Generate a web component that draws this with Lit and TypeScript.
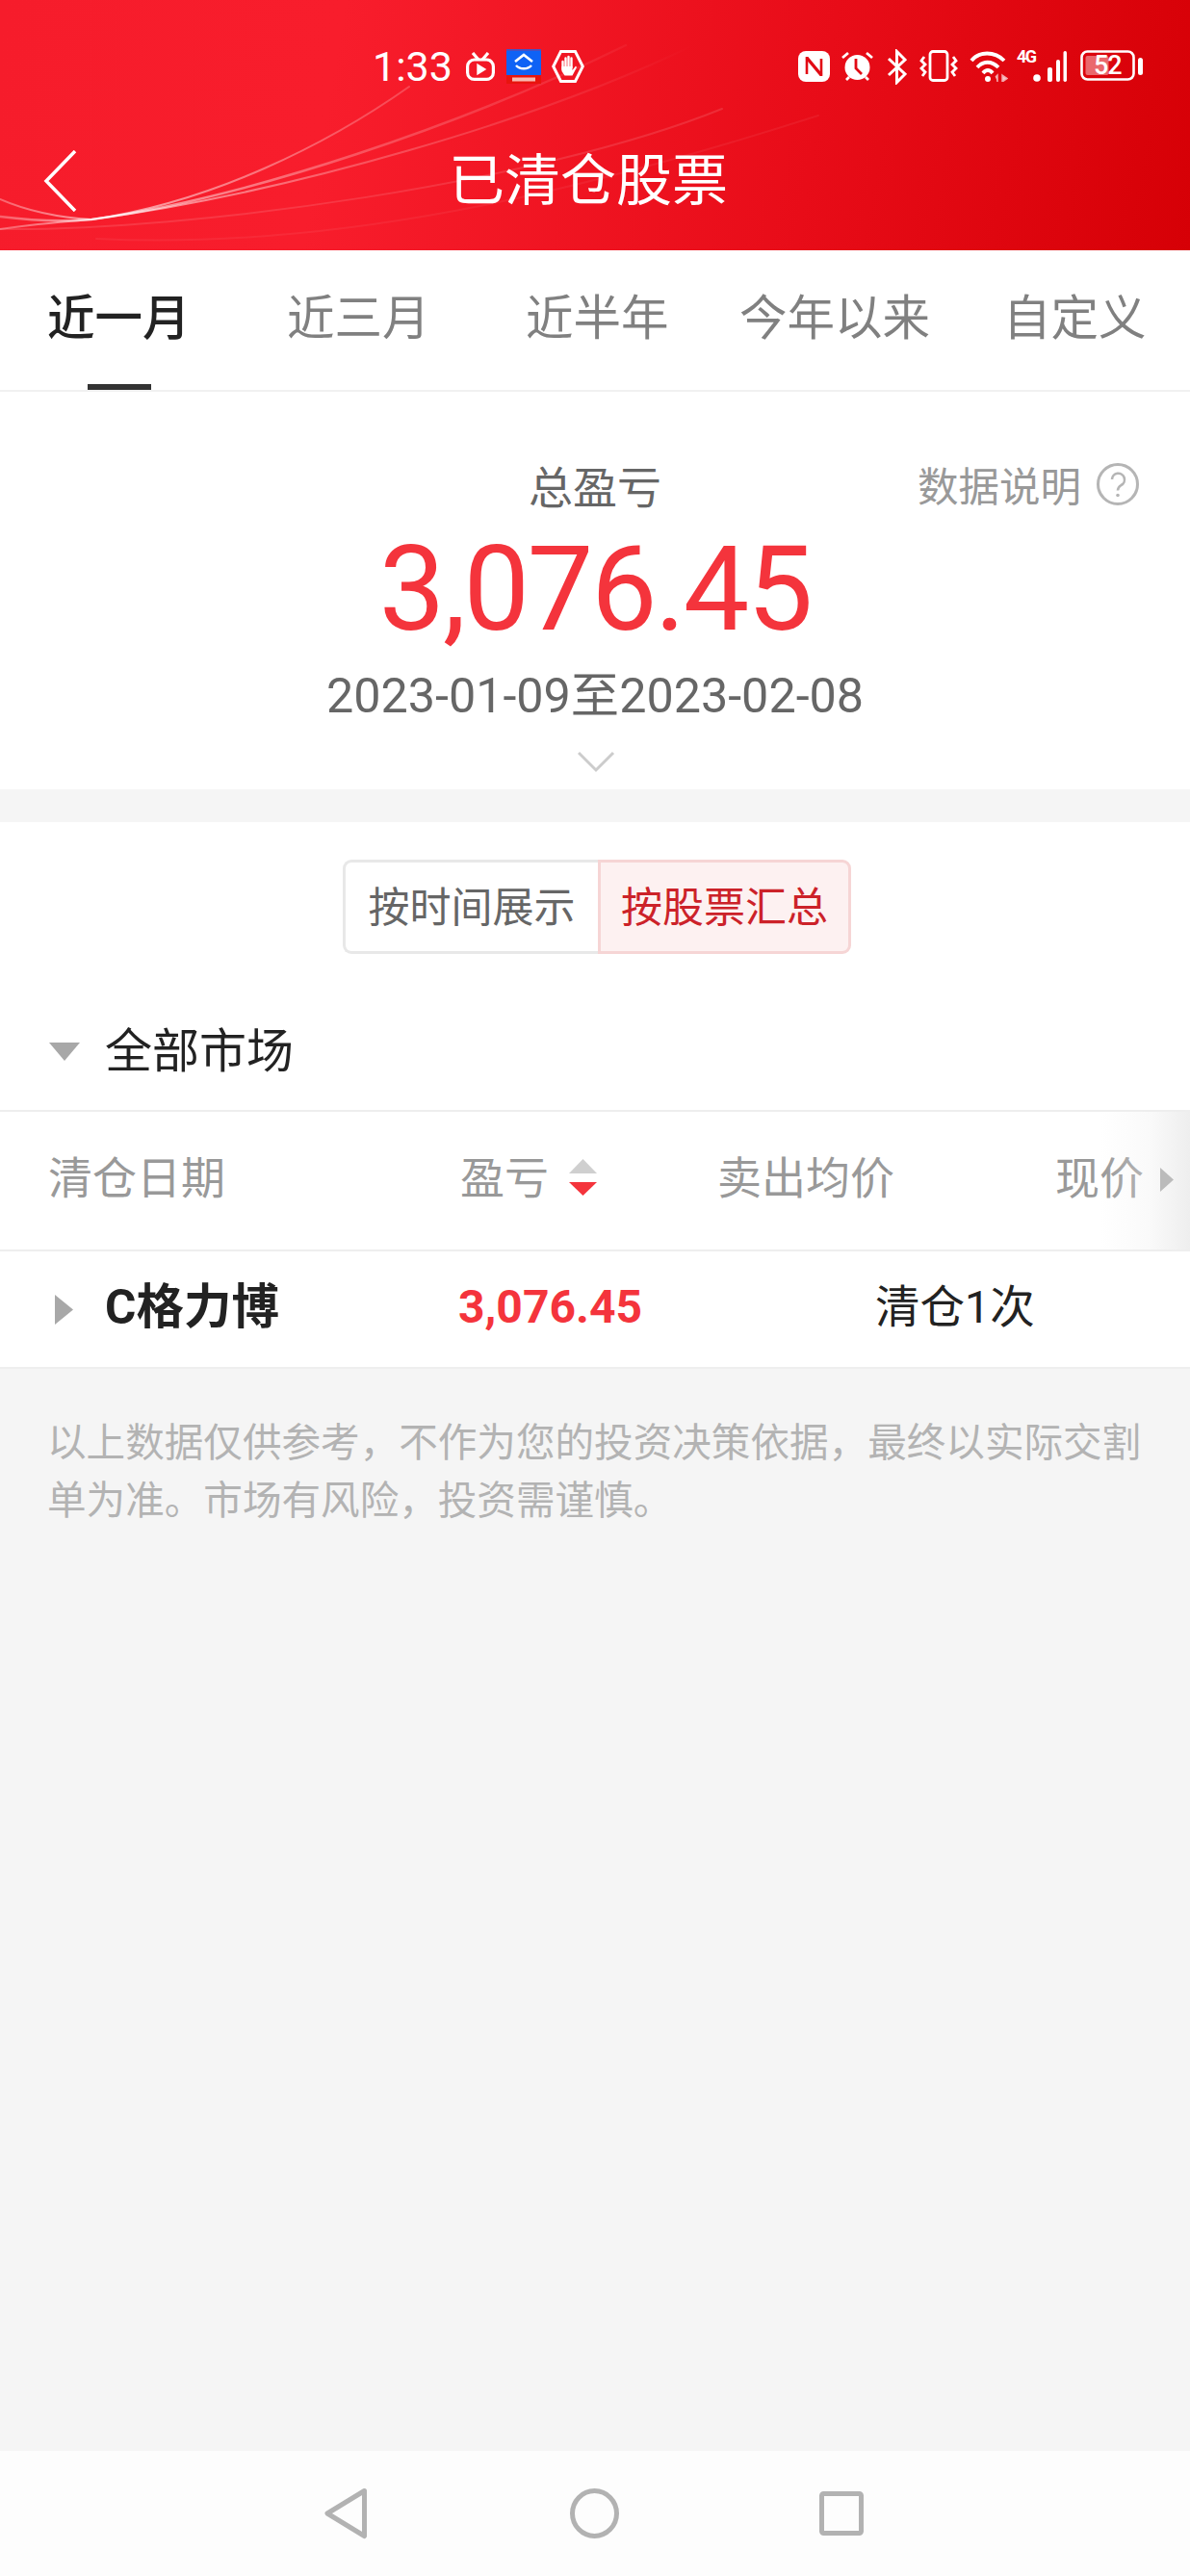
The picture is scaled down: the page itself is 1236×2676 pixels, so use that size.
import { LitElement, html, css } from "lit";
import { customElement } from "lit/decorators.js";

@customElement("app-root")
export class AppRoot extends LitElement {
  static styles = css`
    :host { display: block; width: 1236px; height: 2676px; background: #f5f5f5; font-family: "Roboto", "Noto Sans CJK SC", sans-serif; overflow: hidden; }
    .page { display: flex; flex-direction: column; height: 2676px; }
    .header { position: relative; height: 260px; flex: none; background: linear-gradient(100deg, #f61c2b 0%, #f81d2c 28%, #e80c18 68%, #d60006 100%); color: #fff; overflow: hidden; }
    .lines { position: absolute; inset: 0; }
    .status { position: relative; height: 70px; }
    .time { position: absolute; left: 387px; top: 46px; font-size: 43px; line-height: 46px; font-family: "Roboto", sans-serif; }
    .sicon { position: absolute; }
    .bar { position: relative; height: 190px; display: flex; align-items: center; justify-content: center; }
    .title { font-size: 58px; line-height: 70px; margin: 0 12px 0 0; position: relative; top: 18px; left: -1px; font-family: "Noto Sans CJK SC", sans-serif; }
    .back { position: absolute; left: 44px; top: 86px; }
    .tabs { height: 147px; flex: none; box-sizing: border-box; background: #fff; border-bottom: 2px solid #f1f1f1; position: relative; font-family: "Noto Sans CJK SC", sans-serif; font-size: 49.5px; color: #808080; }
    .tab { position: absolute; top: 35px; line-height: 64px; white-space: nowrap; }
    .tab.on { color: #222; font-weight: 500; }
    .tab.on::after { content: ""; position: absolute; left: 42px; width: 66px; height: 6px; top: 104px; background: #333; }
    .summary { position: relative; height: 413px; flex: none; background: #fff; display: flex; flex-direction: column; align-items: center; }
    .sum-label { margin-top: 68px; font-size: 46px; line-height: 56px; color: #666; font-family: "Noto Sans CJK SC", sans-serif; }
    .sum-value { margin-top: 17px; font-size: 122px; line-height: 130px; color: #f4343c; font-family: "Roboto", sans-serif; letter-spacing: -2.4px; }
    .sum-date { margin-top: 17px; font-size: 50.3px; line-height: 56px; color: #666; font-family: "Roboto", "Noto Sans CJK SC", sans-serif; }
    .note { position: absolute; right: 52px; top: 68px; display: flex; align-items: center; gap: 15px; font-size: 42.5px; line-height: 56px; color: #999; font-family: "Noto Sans CJK SC", sans-serif; }
    .chev { position: absolute; left: 600px; top: 372px; }
    .card { margin-top: 34px; background: #fff; flex: none; }
    .toggle-wrap { padding-top: 39px; display: flex; padding-left: 356px; }
    .toggle { display: flex; height: 98px; font-size: 43px; font-family: "Noto Sans CJK SC", sans-serif; }
    .tg { box-sizing: border-box; display: flex; align-items: center; justify-content: center; padding-bottom: 6px; }
    .tg.off { width: 265px; color: #666; border: 3px solid #e8e8e8; border-right: none; border-radius: 9px 0 0 9px; }
    .tg.on { width: 263px; color: #cc2229; background: #fdf1f1; border: 3px solid #f6d5d5; border-radius: 0 9px 9px 0; }
    .market { height: 164px; box-sizing: border-box; padding-top: 30px; border-bottom: 2px solid #eeeeee; display: flex; align-items: center; font-size: 49px; color: #222; font-family: "Noto Sans CJK SC", sans-serif; }
    .tri-d { margin: 10px 26px 0 51px; }
    .thead { position: relative; height: 145px; box-sizing: border-box; border-bottom: 2px solid #eeeeee; font-size: 46px; color: #999; font-family: "Noto Sans CJK SC", sans-serif; }
    .th { position: absolute; top: 35px; line-height: 60px; white-space: nowrap; display: flex; align-items: center; }
    .sort { margin-left: 21px; margin-top: 6px; }
    .fade { position: absolute; right: 0; top: 0; bottom: 0; width: 93px; background: linear-gradient(90deg, rgba(238,238,238,0) 0%, rgba(240,240,240,.35) 55%, #eeeeee 100%); }
    .th-arrow { position: absolute; left: 1205px; top: 58px; }
    .row { position: relative; height: 122px; box-sizing: border-box; border-bottom: 2px solid #eeeeee; }
    .cell { position: absolute; top: 28px; line-height: 60px; white-space: nowrap; }
    .name { left: 109px; font-size: 49.5px; font-weight: 700; color: #222; font-family: "Roboto", "Noto Sans CJK SC", sans-serif; }
    .pl { left: 476px; font-size: 48px; font-weight: 700; color: #f4343c; font-family: "Roboto", sans-serif; }
    .cnt { left: 909px; font-size: 46.5px; color: #222; font-family: "Roboto", "Noto Sans CJK SC", sans-serif; }
    .tri-r { position: absolute; left: 57px; top: 45px; }
    .disc { padding: 44px 49px 0; font-size: 40.6px; line-height: 60px; color: #b3b3b3; font-family: "Noto Sans CJK SC", sans-serif; }
    .spacer { flex: 1; }
    .nav { height: 130px; flex: none; background: #fdfdfd; position: relative; }
    .nav-icons { position: absolute; left: 0; top: 0; }
    .s4g { left: 1056px; top: 50px; font: 700 18px/18px "Roboto", sans-serif; letter-spacing: -1.5px; color: #fff; }
    .s52 { left: 1136px; top: 50px; font: 500 27px/36px "Roboto", sans-serif; letter-spacing: -1.2px; color: #fff; }
  `;

  render() {
    return html`<div class="page">
      <div class="header">
        <svg class="lines" width="1236" height="260" viewBox="0 0 1236 260" fill="none" stroke="url(#sweep)" stroke-linecap="round">
          <defs>
            <linearGradient id="sweep" gradientUnits="userSpaceOnUse" x1="0" y1="230" x2="720" y2="50">
              <stop offset="0" stop-color="#fff" stop-opacity=".3"/>
              <stop offset=".15" stop-color="#fff" stop-opacity=".6"/>
              <stop offset=".5" stop-color="#fff" stop-opacity=".25"/>
              <stop offset="1" stop-color="#fff" stop-opacity="0"/>
            </linearGradient>
          </defs>
          <path d="M0 207 C30 220 60 226 95 228 C220 210 340 150 425 90" stroke-width="2"/>
          <path d="M0 225 C40 230 70 230 95 228 C260 205 480 130 650 47" stroke-width="2.5"/>
          <path d="M0 238 C40 232 70 230 95 228 C300 200 560 125 720 47" stroke-width="2"/>
          <path d="M0 238 C200 240 560 190 750 113" stroke="#fff" stroke-opacity=".12" stroke-width="2"/>
          <path d="M100 248 C350 260 600 200 850 120" stroke="#fff" stroke-opacity=".06" stroke-width="2"/>
        </svg>
        <div class="status">
          <span class="time">1:33</span>
          ${this.statusIcons()}
        </div>
        <div class="bar">
          <svg class="back" width="38" height="64" viewBox="0 0 38 64" fill="none" stroke="#fff" stroke-width="3.5"><path d="M34 1 L4 32 L34 63"/></svg>
          <span class="title">已清仓股票</span>
        </div>
      </div>
      <div class="tabs">
        <span class="tab on" style="left:49px">近一月</span>
        <span class="tab" style="left:298px">近三月</span>
        <span class="tab" style="left:546px">近半年</span>
        <span class="tab" style="left:768px">今年以来</span>
        <span class="tab" style="left:1042px">自定义</span>
      </div>
      <div class="summary">
        <div class="sum-label">总盈亏</div>
        <div class="sum-value">3,076.45</div>
        <div class="sum-date">2023-01-09至2023-02-08</div>
        <div class="note">数据说明
          <svg width="46" height="46" viewBox="0 0 46 46" fill="none"><circle cx="23" cy="23" r="20.5" stroke="#b5b5b5" stroke-width="3"/><path d="M17 18 a6.5 6.5 0 1 1 9.5 6 c-2.5 1.5 -3.5 2.6 -3.5 5.5" stroke="#b5b5b5" stroke-width="2.6"/><circle cx="23" cy="34.5" r="1.8" fill="#b5b5b5"/></svg>
        </div>
        <svg class="chev" width="40" height="24" viewBox="0 0 40 24" fill="none"><path d="M1 3 L19 21 L37 3" stroke="#cccccc" stroke-width="3"/></svg>
      </div>
      <div class="card">
        <div class="toggle-wrap">
          <div class="toggle"><div class="tg off">按时间展示</div><div class="tg on">按股票汇总</div></div>
        </div>
        <div class="market">
          <svg class="tri-d" width="32" height="19" viewBox="0 0 32 19"><path d="M0 0 H32 L16 19 Z" fill="#a8a8a8"/></svg>
          全部市场
        </div>
        <div class="thead">
          <span class="th" style="left:50px">清仓日期</span>
          <span class="th" style="left:478px">盈亏
            <svg class="sort" width="29" height="38" viewBox="0 0 29 38"><path d="M14.5 0 L29 15 H0 Z" fill="#cfcfcf"/><path d="M0 24 H29 L14.5 38 Z" fill="#f4343c"/></svg>
          </span>
          <span class="th" style="left:745px">卖出均价</span>
          <span class="th" style="left:1096px">现价</span>
          <div class="fade"></div>
          <svg class="th-arrow" width="14" height="25" viewBox="0 0 14 25"><path d="M0 0 L14 12.5 L0 25 Z" fill="#bbbbbb"/></svg>
        </div>
        <div class="row">
          <svg class="tri-r" width="19" height="31" viewBox="0 0 19 31"><path d="M0 0 L19 15.5 L0 31 Z" fill="#a8a8a8"/></svg>
          <span class="cell name">C格力博</span>
          <span class="cell pl">3,076.45</span>
          <span class="cell cnt">清仓1次</span>
        </div>
      </div>
      <div class="disc">以上数据仅供参考，不作为您的投资决策依据，最终以实际交割单为准。市场有风险，投资需谨慎。</div>
      <div class="spacer"></div>
      <div class="nav">
        <svg class="nav-icons" width="1236" height="130" viewBox="0 0 1236 130" fill="none" stroke="#b2b2b2" stroke-width="5" stroke-linejoin="round">
          <path d="M378.5 41.5 L340 65 L378.5 88.5 Z"/>
          <ellipse cx="617.5" cy="65" rx="23" ry="23.5"/>
          <rect x="853.5" y="44.5" width="41" height="41" rx="2"/>
        </svg>
      </div>
    </div>`;
  }

  statusIcons() {
    return html`
      <svg class="sicon" style="left:483px;top:54px" width="32" height="30" viewBox="0 0 32 30" fill="none" stroke="#fff" stroke-width="3.2"><path d="M8 1 L14 8 M24 1 L18 8"/><rect x="2.6" y="8" width="26.8" height="20.4" rx="7"/><path d="M13 13 L21 18 L13 23 Z" fill="#fff" stroke-width="1.4"/></svg>
      <svg class="sicon" style="left:526px;top:51px" width="36" height="36" viewBox="0 0 36 36"><rect width="36" height="2" fill="#4a4fc0"/><rect y="2" width="36" height="25" fill="#0f62f5"/><rect y="27" width="36" height="9" fill="#e8140e"/><path d="M9 13 L18 6 L27 13" fill="none" stroke="#fff" stroke-width="2.6"/><path d="M10 17 a9.5 7 0 0 0 16 0" fill="none" stroke="#fff" stroke-width="2.4"/><rect x="6" y="29.5" width="24" height="4" fill="#f7b9b0"/></svg>
      <svg class="sicon" style="left:573px;top:52px" width="34" height="34" viewBox="0 0 34 34" fill="none" stroke="#fff"><path d="M9.5 1.5 H24.5 L32.3 17 L24.5 32.5 H9.5 L1.7 17 Z" stroke-width="3"/><path d="M11.5 12 V20 M14.5 8.5 V17 M17.5 7 V17 M20.5 8.5 V18" stroke-width="2.4" stroke-linecap="round"/><path d="M10.5 17 H21.5 V21 L25 16.5 L26 18 L21.5 26.5 H13.5 L10.5 22 Z" fill="#fff" stroke="none"/></svg>
      <svg class="sicon" style="left:829px;top:53px" width="33" height="32" viewBox="0 0 33 32"><rect width="33" height="32" rx="8" fill="#fff"/><path d="M9 6 V24 M24 8 V26" fill="none" stroke="#e20a14" stroke-width="2.6"/><path d="M9 7 L24 25" fill="none" stroke="#e20a14" stroke-width="3.4"/></svg>
      <svg class="sicon" style="left:873px;top:53px" width="35" height="32" viewBox="0 0 35 32"><circle cx="17.5" cy="17" r="13" fill="#fff"/><path d="M16 8 V18 L22 24" fill="none" stroke="#e20a14" stroke-width="2.8"/><path d="M2 7 L8 2 M33 7 L27 2 M6 30 L9 27 M29 30 L26 27" stroke="#fff" stroke-width="2.8"/></svg>
      <svg class="sicon" style="left:921px;top:51px" width="21" height="37" viewBox="0 0 21 37" fill="none" stroke="#fff" stroke-width="3"><path d="M2 10 L19 26 L10.5 34.5 V2.5 L19 11 L2 27"/></svg>
      <svg class="sicon" style="left:955px;top:52px" width="40" height="33" viewBox="0 0 40 33" fill="none" stroke="#fff" stroke-width="2.8"><rect x="11" y="1.5" width="18" height="30" rx="3"/><path d="M5 7 L2 11 L6 15 L2 19 L6 23 L3 27 M35 7 L38 11 L34 15 L38 19 L34 23 L37 27"/></svg>
      <svg class="sicon" style="left:1007px;top:53px" width="40" height="32" viewBox="0 0 40 32" fill="none" stroke="#fff" stroke-width="3.8"><path d="M2 10 C10 0 26 0 36 10"/><path d="M8 17 C14 10 23 10 30 17"/><path d="M14 23 C17 19 21 19 24 23"/><circle cx="19" cy="29" r="3" fill="#fff" stroke="none"/><path d="M27 27 L29 25 V32 M34 25 L39 28.5 L34 32 Z" stroke="#f4a9ad" stroke-width="1.5" fill="#f8c7c9"/></svg>
      <span class="sicon s4g">4G</span>
      <svg class="sicon" style="left:1073px;top:53px" width="35" height="32" viewBox="0 0 35 32" fill="#fff"><circle cx="4" cy="28" r="3.8"/><rect x="15" y="17" width="5" height="15" rx="2"/><rect x="24" y="9" width="4" height="23" rx="2"/><rect x="31.5" y="0" width="3.5" height="32" rx="1.7"/></svg>
      <svg class="sicon" style="left:1122px;top:52px" width="66" height="32" viewBox="0 0 66 32"><rect x="1.5" y="1.5" width="54" height="29" rx="6" fill="none" stroke="#fff" stroke-width="2.6"/><rect x="5.5" y="6" width="24" height="20" rx="2" fill="#fff" fill-opacity=".4"/><rect x="60" y="8" width="5" height="18" rx="2.5" fill="#fff"/></svg>
      <span class="sicon s52">52</span>
    `;
  }
}
